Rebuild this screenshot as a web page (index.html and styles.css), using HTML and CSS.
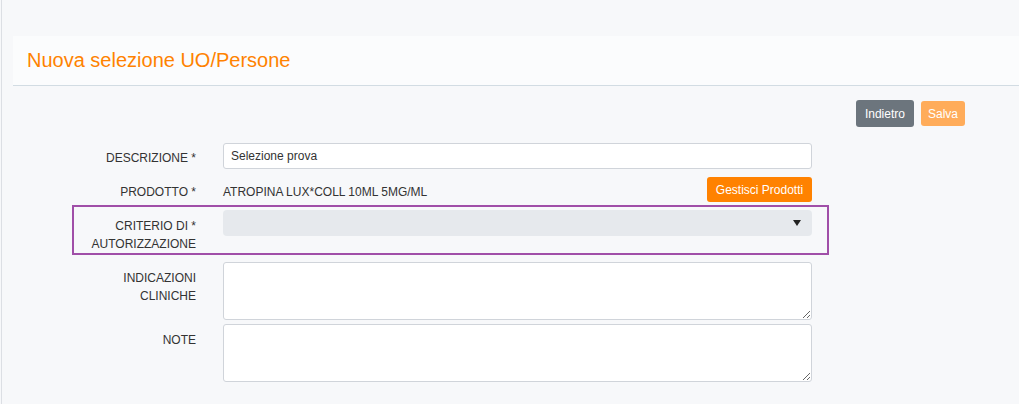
FILE: index.html
```html
<!DOCTYPE html>
<html lang="it">
<head>
    <meta charset="UTF-8">
    <meta name="viewport" content="width=device-width, initial-scale=1.0">
    <title>Nuova selezione UO/Persone</title>
    <link rel="stylesheet" href="styles.css">
</head>
<body>
    <div class="page">
        <div class="page-header">
            <h1>Nuova selezione UO/Persone</h1>
        </div>

        <div class="toolbar">
            <button class="btn btn-back">Indietro</button>
            <button class="btn btn-save" disabled>Salva</button>
        </div>

        <form class="form">
            <div class="field">
                <label for="descrizione">DESCRIZIONE *</label>
                <input type="text" id="descrizione" value="Selezione prova">
            </div>

            <div class="field field-product">
                <label>PRODOTTO *</label>
                <div class="product">
                    <span class="product-name">ATROPINA LUX*COLL 10ML 5MG/ML</span>
                    <button type="button" class="btn btn-orange">Gestisci Prodotti</button>
                </div>
            </div>

            <div class="field field-marked">
                <label for="criterio">CRITERIO DI *<br>AUTORIZZAZIONE</label>
                <div class="select-wrap">
                    <select id="criterio"></select>
                </div>
            </div>

            <div class="field field-text">
                <label for="indicazioni">INDICAZIONI<br>CLINICHE</label>
                <textarea id="indicazioni"></textarea>
            </div>

            <div class="field">
                <label for="note">NOTE</label>
                <textarea id="note"></textarea>
            </div>
        </form>
    </div>
</body>
</html>
```

FILE: styles.css
```css
body {
    margin: 0;
    font-family: "Liberation Sans", Arial, sans-serif;
    font-size: 12px;
    color: #333;
    background-color: #f7f8fa;
}
.page {
    margin-left: 1px;
    border-left: 1px solid #dcdfe4;
    min-height: 404px;
    padding-top: 36px;
    box-sizing: border-box;
}
.page-header {
    margin-left: 11px;
    height: 49px;
    padding-left: 14px;
    display: flex;
    align-items: center;
    background-color: #fbfcfd;
    border-bottom: 1px solid #d2dce3;
}
.page-header h1 {
    margin: 0;
    font-size: 20px;
    font-weight: normal;
    color: #ff8200;
}
.toolbar {
    display: flex;
    justify-content: flex-end;
    align-items: center;
    gap: 7px;
    margin-top: 14px;
    padding-right: 54px;
}
.btn {
    font-family: inherit;
    font-size: 12px;
    color: #fff;
    border: none;
    border-radius: 3px;
    padding: 0 8px;
    cursor: pointer;
}
.btn-back {
    height: 27px;
    padding: 0 9px;
    background-color: #6c757d;
}
.btn-save {
    height: 25px;
    padding: 0 7px;
    background-color: #ffac5a;
    cursor: default;
}
.btn-orange {
    height: 25px;
    width: 105px;
    padding: 0;
    background-color: #ff8200;
}
.form {
    margin-top: 16px;
    margin-left: 75px;
    width: 747px;
}
.field {
    display: grid;
    grid-template-columns: 119px 589px;
    column-gap: 27px;
    padding-right: 12px;
    margin-bottom: 8px;
}
.field label {
    text-align: right;
    line-height: 18px;
    padding-top: 6px;
}
.field input,
.field textarea {
    box-sizing: border-box;
    width: 589px;
    border: 1px solid #d0d4da;
    border-radius: 3px;
    background-color: #fff;
    font-family: inherit;
    font-size: 12px;
    color: #333;
}
.field input {
    height: 26px;
    padding: 0 7px;
}
.field textarea {
    height: 58px;
    padding: 4px 7px;
    display: block;
}
.product {
    display: flex;
    justify-content: space-between;
    align-items: flex-start;
}
.product-name {
    padding-top: 6px;
    line-height: 18px;
}
.field-marked {
    height: 40px;
    margin-bottom: 12px;
    outline: 2px solid #a04fa8;
    outline-offset: 3px;
}
.field-marked label {
    padding-top: 7px;
}
.field-text {
    margin-bottom: 4px;
}
.field-text label,
.field-text + .field label {
    padding-top: 7px;
}
.select-wrap {
    position: relative;
    height: 26px;
}
.select-wrap select {
    appearance: none;
    width: 100%;
    height: 26px;
    border: none;
    border-radius: 4px;
    background-color: #e6e9ed;
}
.select-wrap::after {
    content: "";
    position: absolute;
    right: 11px;
    top: 10px;
    border-left: 4px solid transparent;
    border-right: 4px solid transparent;
    border-top: 6px solid #222;
}
```
